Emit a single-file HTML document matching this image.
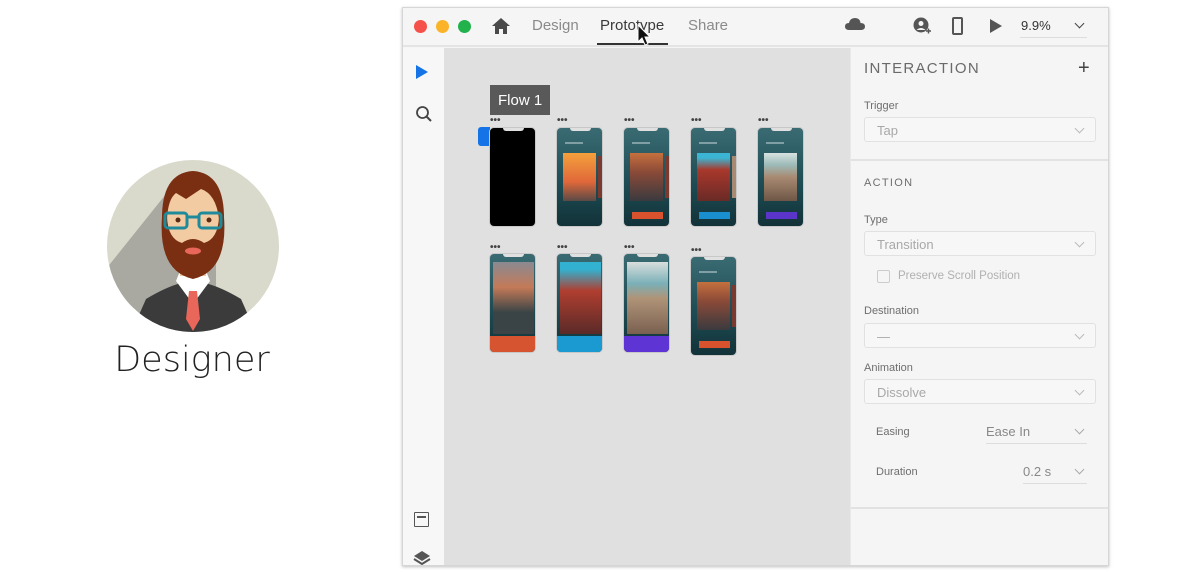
<!DOCTYPE html>
<html><head><meta charset="utf-8"><style>
*{margin:0;padding:0;box-sizing:border-box}
body{width:1200px;height:573px;background:#fff;position:relative;overflow:hidden;font-family:"Liberation Sans",sans-serif}
.a{position:absolute}
.win{left:402px;top:7px;width:707px;height:559px;background:#f5f5f5;border:1px solid #d6d6d6;box-shadow:0 1px 3px rgba(0,0,0,.25)}
.tab{font-size:15px;color:#8a8a8a;top:17px}
.ph{position:absolute;width:47px;height:100px;border-radius:5px;background:linear-gradient(#3a6b73,#1d4a52 60%,#123238);overflow:hidden;border:1px solid #c8c8c8}
.ph .notch{position:absolute;left:13px;top:0;width:21px;height:3px;background:#e0e0e0;border-radius:0 0 3px 3px}
.ph .card{position:absolute;left:6px;top:25px;width:33px;height:48px}
.ph .peek{position:absolute;left:41px;top:28px;width:6px;height:42px;background:#7a3a30}
.ph .btn{position:absolute;left:8px;top:84px;width:31px;height:7px}
.ph .bar{position:absolute;left:0;top:82px;width:47px;height:18px}
.ph .t{position:absolute;left:8px;top:14px;width:18px;height:2px;background:#9fb9bd;opacity:.7}
.dots{position:absolute;font-size:10px;color:#444;letter-spacing:0px;line-height:6px;font-weight:bold}
.lbl{position:absolute;left:864px;font-size:11px;color:#6e6e6e}
.sel{position:absolute;left:864px;width:232px;height:25px;border:1px solid #e1e1e1;border-radius:3px;background:#f7f7f7;font-size:13px;color:#a8a8a8;padding:5px 12px}
.chev{position:absolute;width:7px;height:7px;border-right:1.3px solid #999;border-bottom:1.3px solid #999;transform:rotate(45deg)}
</style></head><body>

<svg class="a" style="left:106px;top:159px" width="174" height="174" viewBox="0 0 174 174">
<defs><clipPath id="c"><circle cx="87" cy="87" r="86"/></clipPath></defs>
<g clip-path="url(#c)">
<rect width="174" height="174" fill="#d9d9cc"/>
<polygon points="0,110 60,35 110,90 110,174 0,174" fill="#a9a9a2"/>
<path d="M25 174 L40 140 Q60 128 75 124 L99 124 Q115 128 135 140 L150 174Z" fill="#3b3b3b"/>
<path d="M70 122 L87 145 L104 122 L100 112 L74 112Z" fill="#fff"/>
<path d="M83 132 L91 132 L94 160 L87 172 L80 160Z" fill="#e8665a"/>
<rect x="74" y="95" width="26" height="22" fill="#efc6a0"/>
<ellipse cx="87" cy="60" rx="30" ry="38" fill="#f3cba3"/>
<path d="M56 62 Q55 14 87 12 Q119 14 118 62 L113 60 Q110 35 95 30 L80 40 L70 34 Q62 40 61 60Z" fill="#7a2e12"/>
<path d="M56 58 L61 58 Q62 80 76 84 Q87 76 98 84 Q112 80 113 58 L118 58 Q122 112 87 120 Q52 112 56 58Z" fill="#7a2e12"/>
<ellipse cx="87" cy="92" rx="8" ry="3.5" fill="#e8665a"/>
<rect x="59" y="54" width="22" height="15" rx="3" fill="none" stroke="#1f8a9a" stroke-width="3"/>
<rect x="93" y="54" width="22" height="15" rx="3" fill="none" stroke="#1f8a9a" stroke-width="3"/>
<line x1="81" y1="58" x2="93" y2="58" stroke="#1f8a9a" stroke-width="3"/>
<circle cx="72" cy="61" r="2.5" fill="#5a2a12"/><circle cx="103" cy="61" r="2.5" fill="#5a2a12"/>
</g></svg>
<div class="a" style="left:92px;top:340px;width:200px;text-align:center;font-size:35px;color:#222;font-family:'DejaVu Sans','Liberation Sans',sans-serif;font-weight:200">Designer</div>

<div class="a win"></div>
<div class="a" style="left:403px;top:8px;width:705px;height:39px;background:#f5f5f5;border-bottom:2px solid #e4e4e4"></div>
<div class="a" style="left:414px;top:20px;width:13px;height:13px;border-radius:50%;background:#f5504a"></div>
<div class="a" style="left:436px;top:20px;width:13px;height:13px;border-radius:50%;background:#fbb42a"></div>
<div class="a" style="left:458px;top:20px;width:13px;height:13px;border-radius:50%;background:#22b24c"></div>
<svg class="a" style="left:491px;top:17px" width="20" height="18" viewBox="0 0 20 18"><path d="M10 1 L1 9 L4 9 L4 17 L8 17 L8 12 L12 12 L12 17 L16 17 L16 9 L19 9Z" fill="#4a4a4a"/></svg>
<div class="a tab" style="left:532px">Design</div>
<div class="a tab" style="left:600px;color:#3a3a3a">Prototype</div>
<div class="a" style="left:597px;top:43px;width:71px;height:2px;background:#333"></div>
<div class="a tab" style="left:688px">Share</div>
<svg class="a" style="left:636px;top:24px" width="16" height="24" viewBox="0 0 16 24"><path d="M2 1 L2 18 L6 14 L9 21 L12 20 L9 13 L14 13Z" fill="#111" stroke="#fff" stroke-width="1"/></svg>
<svg class="a" style="left:845px;top:17px" width="20" height="14" viewBox="0 0 20 14"><path d="M4 13 Q0 13 0 9.5 Q0 6 4 6 Q5 1 10 1 Q15 1 15.5 6 Q20 6 20 9.5 Q20 13 16 13Z" fill="#555"/></svg>
<svg class="a" style="left:912px;top:17px" width="20" height="20" viewBox="0 0 20 20"><circle cx="9" cy="8" r="7.5" fill="#555"/><circle cx="9" cy="6.5" r="2.5" fill="#f5f5f5"/><path d="M4.5 13 Q9 9 13.5 13" fill="#f5f5f5"/><path d="M14 14h5M16.5 11.5v5" stroke="#555" stroke-width="1.5"/></svg>
<div class="a" style="left:952px;top:17px;width:11px;height:18px;border:2px solid #555;border-radius:2px"></div>
<svg class="a" style="left:989px;top:18px" width="14" height="16"><path d="M1 1 L13 8 L1 15Z" fill="#555"/></svg>
<div class="a" style="left:1021px;top:18px;font-size:13px;color:#333">9.9%</div>
<div class="chev" style="left:1076px;top:20px;border-color:#444"></div>
<div class="a" style="left:1020px;top:37px;width:67px;height:1px;background:#ddd"></div>

<div class="a" style="left:403px;top:48px;width:41px;height:517px;background:#f7f7f7"></div>
<svg class="a" style="left:415px;top:64px" width="14" height="16"><path d="M1 1 L13 8 L1 15Z" fill="#1473e6"/></svg>
<svg class="a" style="left:415px;top:105px" width="18" height="18"><circle cx="7.5" cy="7.5" r="5.5" fill="none" stroke="#444" stroke-width="1.8"/><path d="M11.5 11.5 L16 16" stroke="#444" stroke-width="2"/></svg>
<div class="a" style="left:414px;top:512px;width:15px;height:15px;border:1.5px solid #555;border-radius:1px"></div>
<div class="a" style="left:417px;top:516px;width:9px;height:2px;background:#555"></div>
<svg class="a" style="left:413px;top:550px" width="18" height="15"><path d="M9 1 L17 6 L9 11 L1 6Z" fill="#555"/><path d="M1 9 L9 14 L17 9" fill="none" stroke="#555" stroke-width="2"/></svg>

<div class="a" style="left:444px;top:48px;width:406px;height:517px;background:#e0e0e0"></div>
<div class="a" style="left:490px;top:85px;width:60px;height:30px;background:#595959;color:#fff;font-size:15px;padding:7px 0 0 8px">Flow 1</div>
<div class="a" style="left:478px;top:127px;width:12px;height:19px;background:#1473e6;border-radius:3px 0 0 3px"></div>

<div class="dots" style="left:490px;top:118px">•••</div>
<div class="dots" style="left:557px;top:118px">•••</div>
<div class="dots" style="left:624px;top:118px">•••</div>
<div class="dots" style="left:691px;top:118px">•••</div>
<div class="dots" style="left:758px;top:118px">•••</div>
<div class="dots" style="left:490px;top:245px">•••</div>
<div class="dots" style="left:557px;top:245px">•••</div>
<div class="dots" style="left:624px;top:245px">•••</div>
<div class="dots" style="left:691px;top:248px">•••</div>

<div class="ph" style="left:489px;top:127px;background:#000"><div class="notch"></div></div>
<div class="ph" style="left:556px;top:127px"><div class="notch"></div><div class="t"></div><div class="peek"></div><div class="card" style="background:linear-gradient(#f4a03c,#e0683a 60%,#5a4a46)"></div></div>
<div class="ph" style="left:623px;top:127px"><div class="notch"></div><div class="t"></div><div class="peek"></div><div class="card" style="background:linear-gradient(#c5703e,#8a4a38 40%,#3a3a3e)"></div><div class="btn" style="background:#d9522e"></div></div>
<div class="ph" style="left:690px;top:127px"><div class="notch"></div><div class="t"></div><div class="peek" style="background:#a88a72"></div><div class="card" style="background:linear-gradient(#3ab6d4 10%,#a8382c 35%,#6a2a26)"></div><div class="btn" style="background:#1a8fd0"></div></div>
<div class="ph" style="left:757px;top:127px"><div class="notch"></div><div class="t"></div><div class="card" style="background:linear-gradient(#d8e2e0,#9cbab8 25%,#a88a72 50%,#6e5646)"></div><div class="btn" style="background:#5b35c9"></div></div>

<div class="ph" style="left:489px;top:253px"><div class="notch"></div><div class="card" style="left:3px;top:8px;width:41px;height:72px;background:linear-gradient(#8a8a92,#c47a58 35%,#3a4446 70%)"></div><div class="bar" style="background:#d65530"></div></div>
<div class="ph" style="left:556px;top:253px"><div class="notch"></div><div class="card" style="left:3px;top:8px;width:41px;height:72px;background:linear-gradient(#32b2d0 10%,#b03e30 40%,#5a2a28)"></div><div class="bar" style="background:#1b9ad2"></div></div>
<div class="ph" style="left:623px;top:253px"><div class="notch"></div><div class="card" style="left:3px;top:8px;width:41px;height:72px;background:linear-gradient(#d9dedc,#7ab0b8 30%,#b09478 50%,#7a6050)"></div><div class="bar" style="background:#5e34d4"></div></div>
<div class="ph" style="left:690px;top:256px"><div class="notch"></div><div class="t"></div><div class="peek"></div><div class="card" style="background:linear-gradient(#c5703e,#8a4a38 40%,#3a3a3e)"></div><div class="btn" style="background:#d9522e"></div></div>

<div class="a" style="left:850px;top:48px;width:258px;height:517px;background:#f5f5f5;border-left:1px solid #e8e8e8"></div>
<div class="a" style="left:864px;top:60px;font-size:15px;color:#6a6a6a;letter-spacing:1.3px">INTERACTION</div>
<div class="a" style="left:1078px;top:57px;font-size:20px;color:#444">+</div>
<div class="lbl" style="top:100px">Trigger</div>
<div class="sel" style="top:117px">Tap</div><div class="chev" style="left:1076px;top:125px;border-color:#bbb"></div>
<div class="a" style="left:851px;top:159px;width:257px;height:2px;background:#e2e2e2"></div>
<div class="a" style="left:864px;top:177px;font-size:11px;color:#6e6e6e;letter-spacing:1.3px">ACTION</div>
<div class="lbl" style="top:214px">Type</div>
<div class="sel" style="top:231px">Transition</div><div class="chev" style="left:1076px;top:239px;border-color:#bbb"></div>
<div class="a" style="left:877px;top:270px;width:13px;height:13px;border:1.3px solid #ccc;border-radius:2px"></div>
<div class="a" style="left:898px;top:270px;font-size:11.5px;color:#b0b0b0">Preserve Scroll Position</div>
<div class="lbl" style="top:305px">Destination</div>
<div class="sel" style="top:323px">—</div><div class="chev" style="left:1076px;top:331px;border-color:#bbb"></div>
<div class="lbl" style="top:362px">Animation</div>
<div class="sel" style="top:379px">Dissolve</div><div class="chev" style="left:1076px;top:387px;border-color:#bbb"></div>
<div class="lbl" style="left:876px;top:426px">Easing</div>
<div class="a" style="left:986px;top:424px;font-size:13px;color:#888">Ease In</div>
<div class="chev" style="left:1076px;top:426px;border-color:#aaa"></div>
<div class="a" style="left:986px;top:443px;width:101px;height:1px;background:#ddd"></div>
<div class="lbl" style="left:876px;top:466px">Duration</div>
<div class="a" style="left:1023px;top:464px;font-size:13px;color:#888">0.2 s</div>
<div class="chev" style="left:1076px;top:466px;border-color:#aaa"></div>
<div class="a" style="left:1023px;top:483px;width:64px;height:1px;background:#ddd"></div>
<div class="a" style="left:851px;top:507px;width:257px;height:2px;background:#e2e2e2"></div>
</body></html>
